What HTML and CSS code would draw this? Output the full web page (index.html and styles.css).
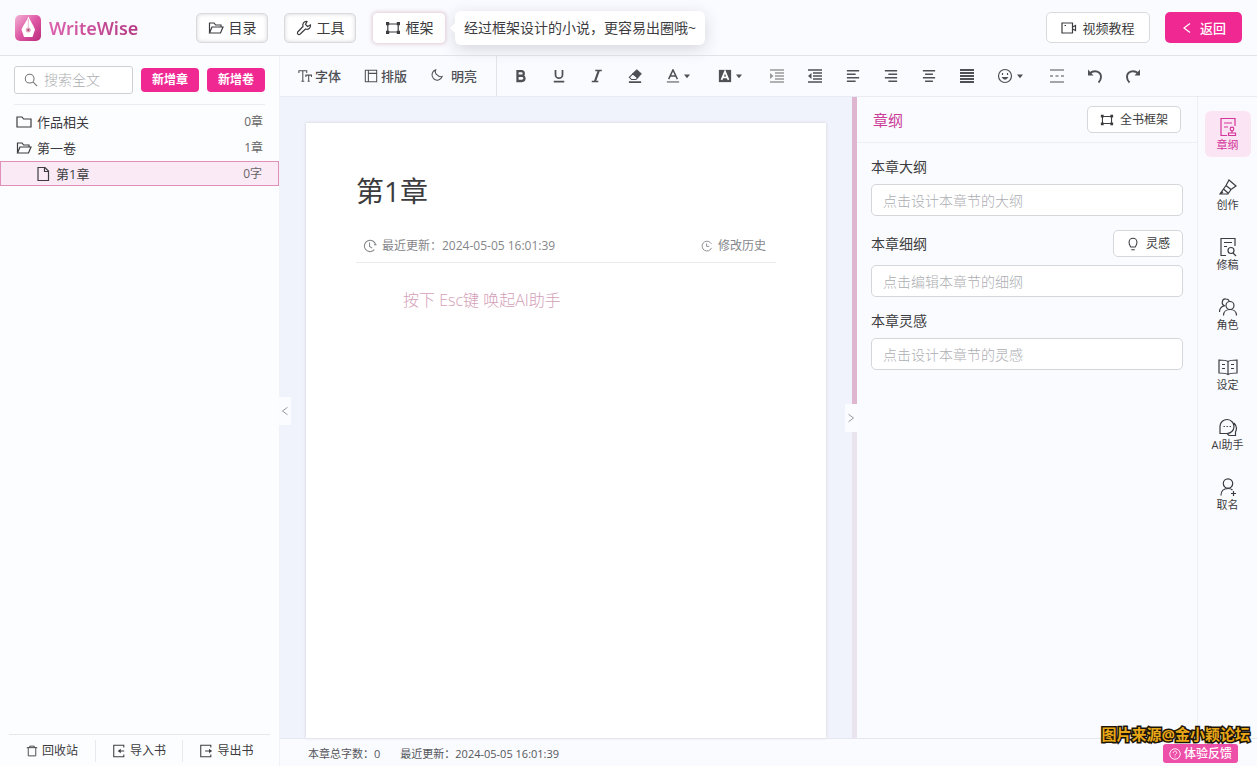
FILE: index.html
```html
<!DOCTYPE html>
<html lang="zh-CN">
<head>
<meta charset="utf-8">
<meta name="viewport" content="width=device-width, initial-scale=1">
<title>WriteWise</title>
<link rel="stylesheet" href="styles.css">
</head>
<body>
<svg class="sprite" aria-hidden="true">
  <symbol id="folder-open" viewBox="0 0 16 16"><path d="M1.500 13V3h4.500l1.600 2H13v2M1.500 13h11L15 7H4L1.500 13z"/></symbol>
  <symbol id="folder" viewBox="0 0 16 16"><path d="M1 13V3h5l1.600 2H15v8z"/></symbol>
  <symbol id="file" viewBox="0 0 16 16"><path d="M3 1.500h7l3.500 3.500v9.500H3zM9.500 1.500V5.500h4"/></symbol>
  <symbol id="wrench" viewBox="0 0 16 16"><path d="M11 1.500 9.500 4.500l2 2 3-1.500c.4 3-2.200 5-5 4L4 14.300c-1.600 1-3.300-.8-2.300-2.300L7 6.500c-1-2.800 1-5.400 4-5z"/></symbol>
  <symbol id="frame" viewBox="0 0 16 16"><path d="M3.500 4h9M3.500 12h9M2.800 4.500v7M13.200 4.500v7"/><path fill="currentColor" stroke="none" d="M1 2h3.200v3.200H1zM11.800 2H15v3.200h-3.200zM1 10.800h3.200V14H1zM11.800 10.800H15V14h-3.200z"/></symbol>
  <symbol id="video" viewBox="0 0 16 16"><path d="M1 3h10.500v10H1zM11.500 7 14.500 5.500v5L11.500 9M3.500 5.500h1.500"/></symbol>
  <symbol id="chev-left" viewBox="0 0 16 16"><path d="M12 2 4 8l8 6"/></symbol>
  <symbol id="chev-right" viewBox="0 0 16 16"><path d="m4 2 8 6-8 6"/></symbol>
  <symbol id="search" viewBox="0 0 16 16"><circle cx="6.500" cy="6.500" r="5"/><path d="m10.200 10.200 4.800 4.800"/></symbol>
  <symbol id="type" viewBox="0 0 16 16"><path d="M1 4.500V2h9v2.500M5.500 2v12M3.800 14h3.400M9 9V7h6.500v2M12.200 7v7M11 14h2.500"/></symbol>
  <symbol id="layout" viewBox="0 0 16 16"><path d="M1.500 1.500h13v13h-13zM5 1.500v13M5 5h9.500"/></symbol>
  <symbol id="moon" viewBox="0 0 16 16"><path d="M6.500 1a6 6 0 1 0 7.500 7.500 5 5 0 0 1-5.500-1.500A5 5 0 0 1 6.500 1z"/></symbol>
  <symbol id="bold" viewBox="0 0 16 16"><path stroke-width="2.600" d="M4 2.300h4.500a2.700 2.700 0 0 1 0 5.400H4zM4 7.700h5a3 3 0 0 1 0 6H4z"/></symbol>
  <symbol id="underline" viewBox="0 0 16 16"><path stroke-width="2" d="M4 1v5.500a4 4 0 0 0 8 0V1M2 14.500h12"/></symbol>
  <symbol id="italic" viewBox="0 0 16 16"><path stroke-width="1.500" d="M6 1.700h7.500M2 14.300h7.500"/><path stroke-width="2.500" d="M10 2 5.700 14"/></symbol>
  <symbol id="eraser" viewBox="0 0 16 16"><path fill="currentColor" d="m10 1 5 4.500-4 4.500-5.500-4.500z"/><path d="M5.500 5.500 1.500 9.500l2.500 2.500h5l2-2z"/><path stroke-width="2" d="M1 15h14"/></symbol>
  <symbol id="font-color" viewBox="0 0 16 16"><path stroke-width="1.700" d="M3 11.500 8 1l5 10.500M5 8h6"/><path d="M1 14.800h14"/></symbol>
  <symbol id="font-fill" viewBox="0 0 16 16"><path fill="currentColor" stroke="none" d="M1 1h14v14H1z"/><path class="knock" d="M4 12.500 8 3l4 9.500M5.500 9.500h5"/></symbol>
  <symbol id="caret" viewBox="0 0 8 8"><path fill="currentColor" stroke="none" d="M0 2h8L4 7z"/></symbol>
  <symbol id="indent" viewBox="0 0 16 16"><path d="M1 2h14M6 5h9M6 8h9M6 11h9M1 14h14"/><path fill="currentColor" stroke="none" d="m1 5 3.500 3L1 11z"/></symbol>
  <symbol id="outdent" viewBox="0 0 16 16"><path d="M1 2h14M6 5h9M6 8h9M6 11h9M1 14h14"/><path fill="currentColor" stroke="none" d="M4.500 5 1 8l3.500 3z"/></symbol>
  <symbol id="align-left" viewBox="0 0 16 16"><path d="M1 2h14M1 6h10M1 10h14M1 14h10"/></symbol>
  <symbol id="align-right" viewBox="0 0 16 16"><path d="M1 2h14M5 6h10M1 10h14M5 14h10"/></symbol>
  <symbol id="align-center" viewBox="0 0 16 16"><path d="M1 2h14M3.500 6h9M1 10h14M3.500 14h9"/></symbol>
  <symbol id="justify" viewBox="0 0 16 16"><path stroke-width="2" d="M1 2h14M1 5h14M1 8h14M1 11h14M1 14h14"/></symbol>
  <symbol id="smile" viewBox="0 0 16 16"><circle cx="8" cy="8" r="6.500"/><path d="M5.500 5v2M10.500 5v2"/><path fill="currentColor" stroke="none" d="M4.500 9h7Q8 14.500 4.500 9z"/></symbol>
  <symbol id="divider" viewBox="0 0 16 16"><path d="M1 2h14M1 8h3M6.500 8h3M12 8h3M1 14h14"/></symbol>
  <symbol id="undo" viewBox="0 0 16 16"><path stroke-width="1.900" d="M2.500 5.500C8 1 14 4 14 9c0 2-1 4-2.500 5.500"/><path fill="currentColor" stroke="none" d="M1 1.500v6h5.500z"/></symbol>
  <symbol id="redo" viewBox="0 0 16 16"><path stroke-width="1.900" d="M13.500 5.500C8 1 2 4 2 9c0 2 1 4 2.500 5.500"/><path fill="currentColor" stroke="none" d="M15 1.500v6H9.500z"/></symbol>
  <symbol id="clock" viewBox="0 0 16 16"><path d="M14.500 7a6.500 6.500 0 1 0-1.500 5.200M7.500 4v4.500l3 2M12.500 6.500h3"/></symbol>
  <symbol id="history" viewBox="0 0 16 16"><path d="M14 10.500a6.500 6.500 0 1 1-1.500-7L14 5M7.500 4.500v4h3.500"/></symbol>
  <symbol id="bulb" viewBox="0 0 16 16"><path d="M5.500 11.500C4.500 9.500 3.500 8.500 3.500 6a4.500 4.500 0 0 1 9 0c0 2.500-1 3.500-2 5.500zM6 14.500h4"/></symbol>
  <symbol id="trash" viewBox="0 0 16 16"><path d="M1 3.500h14M5 3.500v-2h6v2M3 3.500v11h10v-11"/></symbol>
  <symbol id="import" viewBox="0 0 16 16"><path d="M13.500 4V1.500H2v13h11.500V12M14 8H8"/><path fill="currentColor" stroke="none" d="M10 5.500 6.500 8l3.500 2.500z"/></symbol>
  <symbol id="export" viewBox="0 0 16 16"><path d="M13.500 4V1.500H2v13h11.500V12M7 8h6"/><path fill="currentColor" stroke="none" d="M11.500 5.500 15 8l-3.500 2.500z"/></symbol>
  <symbol id="help" viewBox="0 0 16 16"><circle cx="8" cy="8" r="7"/><path d="M5.700 6.500C5.700 3.300 10.500 3.500 10.300 6.300 10.200 8 8 7.700 8 10M8 11.500v1"/></symbol>
  <symbol id="r-outline" viewBox="0 0 20 20"><path d="M9 18.500H3v-17h14V9M6 6h8M6 10h4"/><circle cx="14" cy="12" r="1.800"/><path d="M14 14v2M10.500 16h7v2.500h-7z"/></symbol>
  <symbol id="r-write" viewBox="0 0 20 20"><path d="m11 3 7 6-5 3.500-5-4zM8 8.500 2 17h8l3-4.500M5.500 12l4.500 4M2 17l3-2"/></symbol>
  <symbol id="r-revise" viewBox="0 0 20 20"><path d="M8 18.500H3v-17h14V9M6 5.500h8M6 9.500h3"/><circle cx="13" cy="13.500" r="3"/><path d="m15 16 3 3"/></symbol>
  <symbol id="r-role" viewBox="0 0 20 20"><circle cx="12" cy="8.500" r="4"/><path d="M5.500 18.500c0-8 13-8 13 0M7 9C2.500 7.500 4 1.500 8 2c1.700 0 2.800 1 3.200 2M1.500 15c0-3 1.500-5 4-6"/></symbol>
  <symbol id="r-book" viewBox="0 0 20 20"><path d="M10 4.500C8 3 5 3 1 3v13c4 0 7 0 9 1.500 2-1.500 5-1.500 9-1.500V3c-4 0-7 0-9 1.500zM10 4.500v13M4 7.500h3M4 11.500h3M13 7.500h3M13 11.500h3"/></symbol>
  <symbol id="r-chat" viewBox="0 0 20 20"><path d="M2 16.500V9a7 7 0 1 1 7 7.500zM16 6c3 3 3 6 1.500 9v3.500H11l-2-2M5.500 9.500h1.400M8.500 9.500h1.400M11.500 9.500h1.400"/></symbol>
  <symbol id="r-name" viewBox="0 0 20 20"><circle cx="10" cy="6.500" r="4.700"/><path d="M3 18.500c0-5 3-7 7-7 2 0 3.500.5 4.500 1.500M15.500 14v5M13 16.500h5"/></symbol>
</svg>

<div class="app">
  <header class="header">
    <div class="brand">
      <svg class="logo" viewBox="0 0 26 26" aria-hidden="true">
        <defs><linearGradient id="lg" x1="0" y1="0" x2="1" y2="1"><stop offset="0" stop-color="#f3b3d6"/><stop offset=".5" stop-color="#de57a4"/><stop offset="1" stop-color="#b92c7c"/></linearGradient></defs>
        <rect width="26" height="26" rx="5" fill="url(#lg)"/>
        <path d="M13.500 1.500C12 6 8 10 6.500 14.500L9 22h8.500l2.500-7.500C18.500 10 15 6 13.500 1.500z" fill="#fff"/>
        <path d="M13.300 4v9" stroke="#e5a5c8" stroke-width=".8"/>
        <circle cx="13.300" cy="15" r="2.500" fill="#e3a3bd"/><circle cx="13.300" cy="15" r="1" fill="#a84270"/>
      </svg>
      <span class="brand-name">WriteWise</span>
    </div>
    <nav class="header-nav">
      <button class="btn btn-inset"><svg class="ico i16"><use href="#folder-open"/></svg>目录</button>
      <button class="btn btn-inset"><svg class="ico i16"><use href="#wrench"/></svg>工具</button>
      <button class="btn btn-glow"><svg class="ico i16"><use href="#frame"/></svg>框架</button>
      <div class="tip" role="note">经过框架设计的小说，更容易出圈哦~</div>
    </nav>
    <div class="header-actions">
      <button class="btn btn-video"><svg class="ico i16"><use href="#video"/></svg>视频教程</button>
      <button class="btn btn-back"><svg class="ico i12"><use href="#chev-left"/></svg>返回</button>
    </div>
  </header>

  <aside class="sidebar">
    <div class="side-tools">
      <label class="search"><svg class="ico i14"><use href="#search"/></svg><input type="text" placeholder="搜索全文" aria-label="搜索全文"></label>
      <button class="add">新增章</button>
      <button class="add">新增卷</button>
    </div>
    <ul class="tree">
      <li class="node"><svg class="ico i16"><use href="#folder"/></svg><span class="node-name">作品相关</span><span class="count">0章</span></li>
      <li class="node"><svg class="ico i16"><use href="#folder-open"/></svg><span class="node-name">第一卷</span><span class="count">1章</span></li>
      <li class="node node-active"><svg class="ico i16"><use href="#file"/></svg><span class="node-name">第1章</span><span class="count">0字</span></li>
    </ul>
    <div class="side-foot">
      <button class="foot-btn"><svg class="ico i12"><use href="#trash"/></svg>回收站</button>
      <button class="foot-btn"><svg class="ico i14"><use href="#import"/></svg>导入书</button>
      <button class="foot-btn"><svg class="ico i14"><use href="#export"/></svg>导出书</button>
    </div>
    <button class="fold fold-left" aria-label="收起目录"><svg class="ico i10"><use href="#chev-left"/></svg></button>
  </aside>

  <div class="work">
    <div class="toolbar">
      <div class="tool-labels">
        <button class="tl"><svg class="ico i14"><use href="#type"/></svg>字体</button>
        <button class="tl"><svg class="ico i14"><use href="#layout"/></svg>排版</button>
        <button class="tl tl-wide"><svg class="ico i14"><use href="#moon"/></svg>明亮</button>
      </div>
      <div class="tool-icons">
        <button class="ti" aria-label="加粗"><svg class="ico i14"><use href="#bold"/></svg></button>
        <button class="ti" aria-label="下划线"><svg class="ico i14"><use href="#underline"/></svg></button>
        <button class="ti" aria-label="斜体"><svg class="ico i14"><use href="#italic"/></svg></button>
        <button class="ti" aria-label="清除格式"><svg class="ico i14"><use href="#eraser"/></svg></button>
        <button class="ti ti-drop" aria-label="文字颜色"><svg class="ico i14"><use href="#font-color"/></svg><svg class="i6"><use href="#caret"/></svg></button>
        <button class="ti ti-drop" aria-label="背景颜色"><svg class="ico i14"><use href="#font-fill"/></svg><svg class="i6"><use href="#caret"/></svg></button>
        <button class="ti ti-off" aria-label="增加缩进"><svg class="ico thick i16"><use href="#indent"/></svg></button>
        <button class="ti" aria-label="减少缩进"><svg class="ico thick i16"><use href="#outdent"/></svg></button>
        <button class="ti" aria-label="左对齐"><svg class="ico thick i14"><use href="#align-left"/></svg></button>
        <button class="ti" aria-label="右对齐"><svg class="ico thick i14"><use href="#align-right"/></svg></button>
        <button class="ti" aria-label="居中"><svg class="ico thick i14"><use href="#align-center"/></svg></button>
        <button class="ti" aria-label="两端对齐"><svg class="ico i16"><use href="#justify"/></svg></button>
        <button class="ti ti-drop" aria-label="表情"><svg class="ico i16"><use href="#smile"/></svg><svg class="i6"><use href="#caret"/></svg></button>
        <button class="ti" aria-label="分割线"><svg class="ico i16"><use href="#divider"/></svg></button>
        <button class="ti" aria-label="撤销"><svg class="ico i16"><use href="#undo"/></svg></button>
        <button class="ti" aria-label="重做"><svg class="ico i16"><use href="#redo"/></svg></button>
      </div>
    </div>

    <div class="stage">
      <main class="desk">
        <article class="paper">
          <h1 class="title">第1章</h1>
          <div class="meta">
            <span class="meta-item"><svg class="ico i14"><use href="#clock"/></svg>最近更新：2024-05-05 16:01:39</span>
            <button class="meta-item"><svg class="ico i12"><use href="#history"/></svg>修改历史</button>
          </div>
          <p class="hint">按下 Esc键 唤起AI助手</p>
        </article>
      </main>
      <div class="track"><div class="thumb"></div><button class="fold fold-right" aria-label="收起面板"><svg class="ico i10"><use href="#chev-right"/></svg></button></div>
      <section class="panel">
        <div class="panel-head">
          <h2 class="panel-title">章纲</h2>
          <button class="mini"><svg class="ico i14"><use href="#frame"/></svg>全书框架</button>
        </div>
        <div class="fields">
          <div class="field"><div class="field-head"><label for="f1">本章大纲</label></div><input id="f1" class="box" type="text" placeholder="点击设计本章节的大纲"></div>
          <div class="field"><div class="field-head field-head-tall"><label for="f2">本章细纲</label><button class="mini"><svg class="ico i14"><use href="#bulb"/></svg>灵感</button></div><input id="f2" class="box" type="text" placeholder="点击编辑本章节的细纲"></div>
          <div class="field"><div class="field-head"><label for="f3">本章灵感</label></div><input id="f3" class="box" type="text" placeholder="点击设计本章节的灵感"></div>
        </div>
      </section>
      <nav class="rail">
        <button class="rail-btn rail-on"><svg class="ico i20"><use href="#r-outline"/></svg>章纲</button>
        <button class="rail-btn"><svg class="ico i20"><use href="#r-write"/></svg>创作</button>
        <button class="rail-btn"><svg class="ico i20"><use href="#r-revise"/></svg>修稿</button>
        <button class="rail-btn"><svg class="ico i20"><use href="#r-role"/></svg>角色</button>
        <button class="rail-btn"><svg class="ico i20"><use href="#r-book"/></svg>设定</button>
        <button class="rail-btn"><svg class="ico i20"><use href="#r-chat"/></svg>AI助手</button>
        <button class="rail-btn"><svg class="ico i20"><use href="#r-name"/></svg>取名</button>
      </nav>
    </div>

    <footer class="status">
      <span>本章总字数：0</span>
      <span>最近更新：2024-05-05 16:01:39</span>
    </footer>
  </div>
  <div class="corner">
    <div class="credit">图片来源@金小颖论坛</div>
    <button class="feedback"><svg class="ico i12"><use href="#help"/></svg>体验反馈</button>
  </div>
</div>
</body>
</html>
```
FILE: styles.css
```css
* { box-sizing: border-box; }

body {
  margin: 0;
  font-family: "Open Sans", "Noto Sans CJK SC", sans-serif;
  font-size: 14px;
  line-height: 20px;
  color: #3c3c40;
  background: #fafbff;
}

button, input { font: inherit; color: inherit; }
button { display: flex; align-items: center; justify-content: center; margin: 0; padding: 0; border: 0; background: none; white-space: nowrap; cursor: pointer; }
h1, h2, p, ul { margin: 0; padding: 0; }

.sprite { position: absolute; width: 0; height: 0; }
.ico { flex: none; fill: none; stroke: currentColor; stroke-width: 1.2; }
.thick { stroke-width: 1.6; }
.knock { stroke: #fff; stroke-width: 2; }
.i6 { width: 6px; height: 6px; flex: none; }
.i10 { width: 10px; height: 10px; }
.i12 { width: 12px; height: 12px; }
.i14 { width: 14px; height: 14px; }
.i16 { width: 16px; height: 16px; }
.i20 { width: 20px; height: 20px; }

.app {
  position: relative;
  display: grid;
  grid-template: 56px minmax(0, 1fr) / 280px minmax(0, 1fr);
  height: 100vh;
}

/* Header */
.header { grid-column: 1 / -1; display: flex; align-items: center; padding: 0 15px; border-bottom: 1px solid #e2e3e9; }
.brand { display: flex; align-items: center; gap: 8px; width: 181px; }
.logo { width: 26px; height: 26px; }
.brand-name {
  font-family: "Noto Sans", sans-serif;
  font-size: 18px; font-weight: 600; line-height: 24px;
  background: linear-gradient(90deg, #dd62ad, #b53a84);
  -webkit-background-clip: text; background-clip: text; color: transparent;
}
.header-nav { display: flex; align-items: center; gap: 16px; }
.header-actions { display: flex; gap: 15px; margin-left: auto; }
.btn { gap: 5px; height: 30px; border: 1px solid #d9dade; border-radius: 5px; background: #fff; }
.btn-inset { width: 72px; box-shadow: inset 0 0 4px #d5d5da; }
.btn-glow { width: 74px; height: 32px; border-color: #ecdce6; box-shadow: 0 0 4px #dccbd6; }
.btn-video { width: 104px; height: 31px; font-size: 13px; }
.btn-back { width: 77px; height: 31px; gap: 7px; border: 0; background: #f02992; color: #fff; font-size: 13px; font-weight: 500; }
.btn-back .ico { stroke-width: 1.6; }
.tip { position: relative; margin-left: -7px; padding: 7px 9px; border-radius: 6px; background: #fff; box-shadow: 0 4px 16px #d4d5dc; white-space: nowrap; }
.tip::before { content: ""; position: absolute; left: -5px; top: 12px; border: 5px solid transparent; border-left: 0; border-right-color: #fff; }

/* Sidebar */
.sidebar { position: relative; display: flex; flex-direction: column; background: #fcfdff; border-right: 1px solid #f1f2f8; }
.side-tools { display: flex; align-items: center; gap: 8px; margin: 0 14px; padding: 10px 0; border-bottom: 1px solid #ebecf1; }
.search { display: flex; align-items: center; gap: 6px; flex: 1; min-width: 0; height: 28px; padding: 0 9px; border: 1px solid #cdd1d5; border-radius: 3px; background: #fff; color: #777; }
.search input { width: 100%; min-width: 0; padding: 0; border: 0; outline: 0; background: none; }
::placeholder { color: #adaeb2; opacity: 1; font-weight: 300; }
.add { width: 58px; height: 24px; border-radius: 4px; background: #f02992; color: #fff; font-size: 12px; font-weight: 600; }
.tree { flex: 1; padding-top: 4px; list-style: none; font-size: 13px; }
.node { display: flex; align-items: center; gap: 5px; height: 26px; padding: 0 16px; }
.node-name { flex: 1; }
.count { color: #666; font-size: 12px; }
.node-active { height: 25px; padding: 0 16px 0 34px; border: 1px solid #df8fba; background: #faeaf6; }
.side-foot { display: grid; grid-template-columns: repeat(3, 1fr); margin: 0 9px; padding: 5px 0 4px; border-top: 1px solid #e6e7ec; font-size: 12px; }
.foot-btn { gap: 4px; height: 22px; border-right: 1px solid #e8e9ee; }
.foot-btn:last-child { border-right: 0; }
.fold { position: absolute; z-index: 2; width: 12px; height: 28px; background: #fbfcff; color: #777; }
.fold-left { left: 279px; top: 341px; }
.fold-right { right: 0; top: 307px; }

/* Work area */
.work { display: flex; flex-direction: column; min-width: 0; }
.toolbar { display: flex; height: 41px; border-bottom: 1px solid #e9eaf2; color: #4f5055; }
.tool-labels { display: flex; align-items: center; gap: 23px; width: 217px; padding-left: 18px; border-right: 1px solid #e2e3ea; font-size: 13px; font-weight: 500; }
.tl { gap: 3px; }
.tl-wide { gap: 7px; }
.tool-icons { display: flex; align-items: center; padding-left: 5px; }
.ti { width: 38px; height: 38px; }
.ti-drop { width: 52px; gap: 4px; padding-right: 4px; }
.ti-off { color: #999; }
.stage { flex: 1; display: flex; min-height: 0; }

/* Manuscript */
.desk { flex: 1; display: flex; padding: 26px 26px 0; background: #f1f3fc; min-width: 0; }
.paper { flex: 1; padding: 50px 50px 0; background: #fff; box-shadow: 0 0 3px #cfd0d8; min-width: 0; }
.title { font-size: 28px; font-weight: 400; line-height: 36px; }
.meta { display: flex; justify-content: space-between; margin-top: 21px; padding: 6px 10px 6px 7px; border-bottom: 1px solid #ececef; font-size: 12px; color: #85868a; }
.meta-item { display: flex; align-items: center; gap: 5px; }
.hint { padding: 27px 47px; font-size: 16px; font-weight: 300; color: #d4a0b8; }
.track { position: relative; width: 5px; background: #eae4ef; }
.thumb { height: 307px; background: #dfb6d0; }

/* Outline panel */
.panel { width: 341px; flex: none; border-right: 1px solid #eeeff4; }
.panel-head { display: flex; align-items: center; justify-content: space-between; height: 46px; padding: 0 16px; border-bottom: 1px solid #eeeff4; }
.panel-title { font-size: 15px; font-weight: 400; color: #cb3c98; }
.mini { gap: 6px; height: 27px; padding: 0 12px; border: 1px solid #d6d7db; border-radius: 5px; background: #fff; font-size: 12px; }
.fields { display: flex; flex-direction: column; gap: 14px; padding: 14px 14px 0; }
.field-head { display: flex; align-items: center; justify-content: space-between; height: 20px; margin-bottom: 7px; }
.field-head-tall { height: 27px; margin-bottom: 8px; }
.box { display: block; width: 100%; height: 32px; padding: 0 11px; border: 1px solid #d5d6da; border-radius: 5px; background: #fff; }

/* Tool rail */
.rail { width: 59px; flex: none; display: flex; flex-direction: column; align-items: center; gap: 14px; padding-top: 14px; }
.rail-btn { flex-direction: column; width: 46px; height: 46px; padding-top: 2px; border-radius: 6px; font-size: 11px; line-height: 16px; }
.rail-on { background: #fbe4f3; color: #d3359a; }

/* Status bar */
.status { display: flex; align-items: center; gap: 20px; height: 28px; padding: 3px 28px 0; border-top: 1px solid #e6e7ee; font-size: 11px; color: #55565b; }

.corner { position: absolute; right: 7px; bottom: 3px; display: flex; flex-direction: column; align-items: flex-end; }
.credit { font-size: 15px; font-weight: 700; color: #e8a717; -webkit-text-stroke: 3px #1a1408; paint-order: stroke fill; }
.feedback { gap: 3px; width: 75px; height: 19px; margin-right: 12px; border-radius: 3px; background: #ed4fa9; color: #fff; font-size: 12px; font-weight: 500; }
```
